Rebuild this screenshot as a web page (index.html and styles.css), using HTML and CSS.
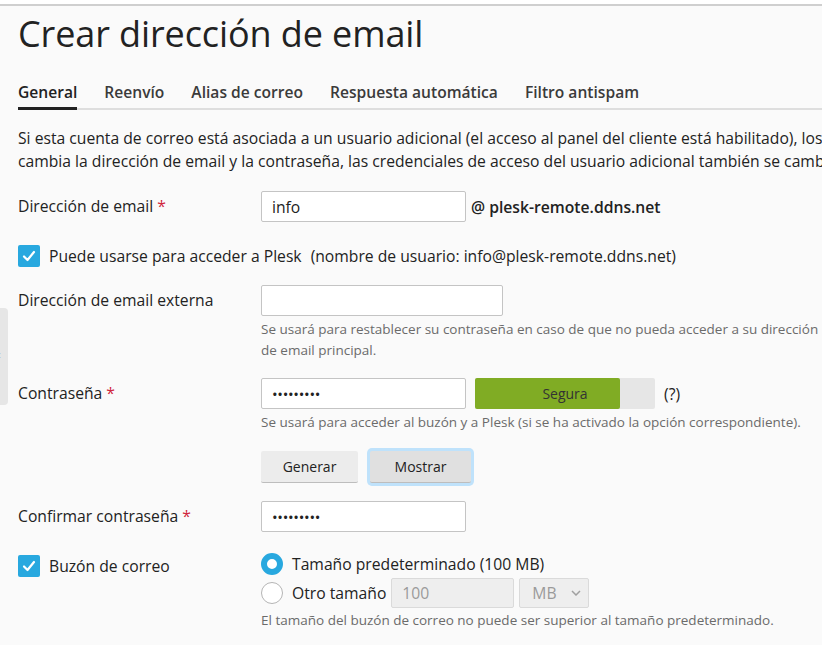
FILE: index.html
```html
<!DOCTYPE html>
<html lang="es">
<head>
<meta charset="utf-8">
<title>Crear dirección de email</title>
<link rel="stylesheet" href="styles.css">
</head>
<body>
<div class="topline"></div>
<div class="sidetab"><span class="sidechev">‹</span></div>
<main class="page">
  <h1 class="title">Crear dirección de email</h1>
  <nav class="tabs">
    <a class="tab active">General</a>
    <a class="tab">Reenvío</a>
    <a class="tab">Alias de correo</a>
    <a class="tab">Respuesta automática</a>
    <a class="tab">Filtro antispam</a>
  </nav>
  <p class="intro">Si esta cuenta de correo está asociada a un usuario adicional (el acceso al panel del cliente está habilitado), los datos de acceso se actualizarán. Si<br>cambia la dirección de email y la contraseña, las credenciales de acceso del usuario adicional también se cambiarán.</p>

  <div class="row r-email">
    <label class="label">Dirección de email <span class="req">*</span></label>
    <div class="field inline">
      <input class="input w205" type="text" value="info">
      <span class="domain">@ plesk-remote.ddns.net</span>
    </div>
  </div>

  <div class="row r-plesk">
    <span class="check"><svg viewBox="0 0 22 22" width="22" height="22"><path d="M6 11.5l3.5 3.5L16 7" fill="none" stroke="#fff" stroke-width="2.2" stroke-linecap="round" stroke-linejoin="round"/></svg></span>
    <span class="checklabel">Puede usarse para acceder a Plesk</span>
    <span class="userinfo">(nombre de usuario: info@plesk-remote.ddns.net)</span>
  </div>

  <div class="row r-ext">
    <label class="label">Dirección de email externa</label>
    <div class="field">
      <input class="input w242" type="text" value="">
      <div class="hint">Se usará para restablecer su contraseña en caso de que no pueda acceder a su dirección de email principal.</div>
    </div>
  </div>

  <div class="row r-pass">
    <label class="label">Contraseña <span class="req">*</span></label>
    <div class="field">
      <div class="inline">
        <input class="input w205 pw" type="text" value="•••••••••">
        <div class="strength"><div class="strength-fill">Segura</div></div>
        <span class="qmark">(?)</span>
      </div>
      <div class="hint">Se usará para acceder al buzón y a Plesk (si se ha activado la opción correspondiente).</div>
      <div class="buttons">
        <button class="btn">Generar</button>
        <button class="btn focused">Mostrar</button>
      </div>
    </div>
  </div>

  <div class="row r-confirm">
    <label class="label">Confirmar contraseña <span class="req">*</span></label>
    <div class="field">
      <input class="input w205 pw" type="text" value="•••••••••">
    </div>
  </div>

  <div class="row r-box">
    <div class="label boxlabel">
      <span class="check"><svg viewBox="0 0 22 22" width="22" height="22"><path d="M6 11.5l3.5 3.5L16 7" fill="none" stroke="#fff" stroke-width="2.2" stroke-linecap="round" stroke-linejoin="round"/></svg></span>
      <span class="checklabel">Buzón de correo</span>
    </div>
    <div class="field boxfield">
      <div class="radio-row">
        <span class="radio on"></span>
        <span class="radiotext">Tamaño predeterminado (100 MB)</span>
      </div>
      <div class="radio-row">
        <span class="radio"></span>
        <span class="radiotext">Otro tamaño</span>
        <input class="input disabled w123" type="text" value="100" disabled>
        <span class="select">MB <svg width="10" height="6" viewBox="0 0 10 6"><path d="M1 1l4 4 4-4" fill="none" stroke="#a0a0a0" stroke-width="1.5"/></svg></span>
      </div>
      <div class="hint">El tamaño del buzón de correo no puede ser superior al tamaño predeterminado.</div>
    </div>
  </div>
</main>
</body>
</html>
```

FILE: styles.css
```css
html, body {
  margin: 0;
  padding: 0;
  background: #fafafa;
  overflow: hidden;
}
body {
  font-family: "Open Sans", "DejaVu Sans", sans-serif;
  color: #222;
  width: 822px;
  height: 645px;
  position: relative;
}
.topline {
  height: 4px;
  background: #fff;
  border-bottom: 2px solid #cfcfcf;
}
.sidetab {
  position: absolute;
  left: 0;
  top: 308px;
  width: 8px;
  height: 97px;
  background: #e6e6e6;
  border-radius: 0 4px 4px 0;
}
.sidechev {
  position: absolute;
  left: -3px;
  top: 38px;
  font-size: 12px;
  color: #555;
}
.page {
  padding: 0 0 0 18px;
  white-space: nowrap;
}
.title {
  margin: 8px 0 0 0;
  font-size: 36px;
  font-weight: 400;
  line-height: 40px;
  color: #222;
  letter-spacing: -0.1px;
}
.tabs {
  margin-top: 28px;
  display: flex;
  gap: 27px;
  border-bottom: 2px solid #dedede;
  height: 26px;
}
.tab {
  font-size: 15.6px;
  font-weight: 600;
  color: #3b3b3b;
  line-height: 20px;
  height: 28px;
  box-sizing: border-box;
}
.tab.active {
  color: #222;
  border-bottom: 3px solid #222;
}
.intro {
  margin: 17px 0 0 0;
  font-size: 15.7px;
  line-height: 23px;
  color: #222;
}
.row {
  display: flex;
  align-items: flex-start;
}
.label {
  width: 243px;
  flex: none;
  font-size: 15.7px;
  line-height: 31px;
  color: #222;
}
.req {
  color: #d0253b;
}
.field {
  display: flex;
  flex-direction: column;
}
.inline {
  display: flex;
  flex-direction: row;
  align-items: center;
}
.input {
  box-sizing: border-box;
  height: 31px;
  border: 1px solid #c4c4c4;
  border-radius: 2px;
  background: #fff;
  font-family: "Open Sans", sans-serif;
  font-size: 15.7px;
  color: #222;
  padding: 0 10px;
  margin: 0;
  outline: none;
}
.w205 { width: 205px; }
.w242 { width: 242px; }
.w123 { width: 123px; }
.pw { font-size: 15px; letter-spacing: -0.3px; }
.domain {
  margin-left: 5px;
  font-size: 15.7px;
  font-weight: 600;
  color: #222;
}
.r-email { margin-top: 18px; }
.r-plesk {
  margin-top: 23px;
  align-items: center;
  height: 22px;
}
.check {
  display: inline-block;
  width: 22px;
  height: 22px;
  background: #28a8df;
  border-radius: 2px;
  flex: none;
}
.check svg { display: block; }
.checklabel {
  margin-left: 9px;
  font-size: 15.7px;
  color: #222;
}
.userinfo {
  margin-left: 9px;
  font-size: 15.7px;
  color: #222;
}
.r-ext { margin-top: 18px; }
.hint {
  font-size: 13.5px;
  line-height: 21px;
  color: #6b6b6b;
  margin-top: 3px;
  white-space: normal;
  width: 565px;
}
.r-pass { margin-top: 17px; }
.strength {
  margin-left: 9px;
  width: 180px;
  height: 31px;
  background: #e6e6e6;
  border-radius: 2px;
}
.strength-fill {
  width: 145px;
  height: 31px;
  background: #80ac24;
  border-radius: 2px;
  text-align: center;
  font-size: 14px;
  line-height: 31px;
  color: #333;
  padding-left: 35px;
  box-sizing: border-box;
}
.qmark {
  margin-left: 9px;
  font-size: 15.7px;
  color: #222;
}
.buttons {
  margin-top: 18px;
  display: flex;
  gap: 12px;
  align-items: center;
}
.btn {
  box-sizing: border-box;
  height: 32px;
  background: #ececec;
  border: none;
  border-bottom: 1px solid #bdbdbd;
  border-radius: 2px;
  font-family: "Open Sans", sans-serif;
  font-size: 14px;
  color: #222;
  padding: 0;
  width: 97px;
  margin: 0;
}
.btn.focused {
  background: #e0e0e0;
  width: 101px;
  box-shadow: 0 0 0 3px #bfe2fb;
}
.r-confirm { margin-top: 18px; }
.r-box { margin-top: 21px; }
.boxlabel {
  display: flex;
  align-items: center;
  height: 22px;
  margin-top: 2px;
}
.boxfield { margin-top: -4px; }
.radio-row {
  display: flex;
  align-items: center;
  height: 29px;
}
.radio {
  box-sizing: border-box;
  width: 22px;
  height: 22px;
  border-radius: 50%;
  border: 1px solid #b5b5b5;
  background: #fff;
  flex: none;
}
.radio.on {
  border: 6px solid #28a8df;
  background: #fff;
}
.radiotext {
  margin-left: 9px;
  font-size: 15.7px;
  color: #222;
}
.input.disabled {
  margin-left: 5px;
  height: 30px;
  background: #eeeeee;
  border-color: #dadada;
  color: #9a9a9a;
  font-size: 15.7px;
}
.select {
  box-sizing: border-box;
  margin-left: 5px;
  width: 70px;
  height: 30px;
  background: #eeeeee;
  border: 1px solid #dadada;
  border-radius: 2px;
  font-size: 15.7px;
  color: #9a9a9a;
  display: flex;
  align-items: center;
  padding-left: 12px;
  gap: 14px;
}
.r-box .hint { margin-top: 3px; }
```
